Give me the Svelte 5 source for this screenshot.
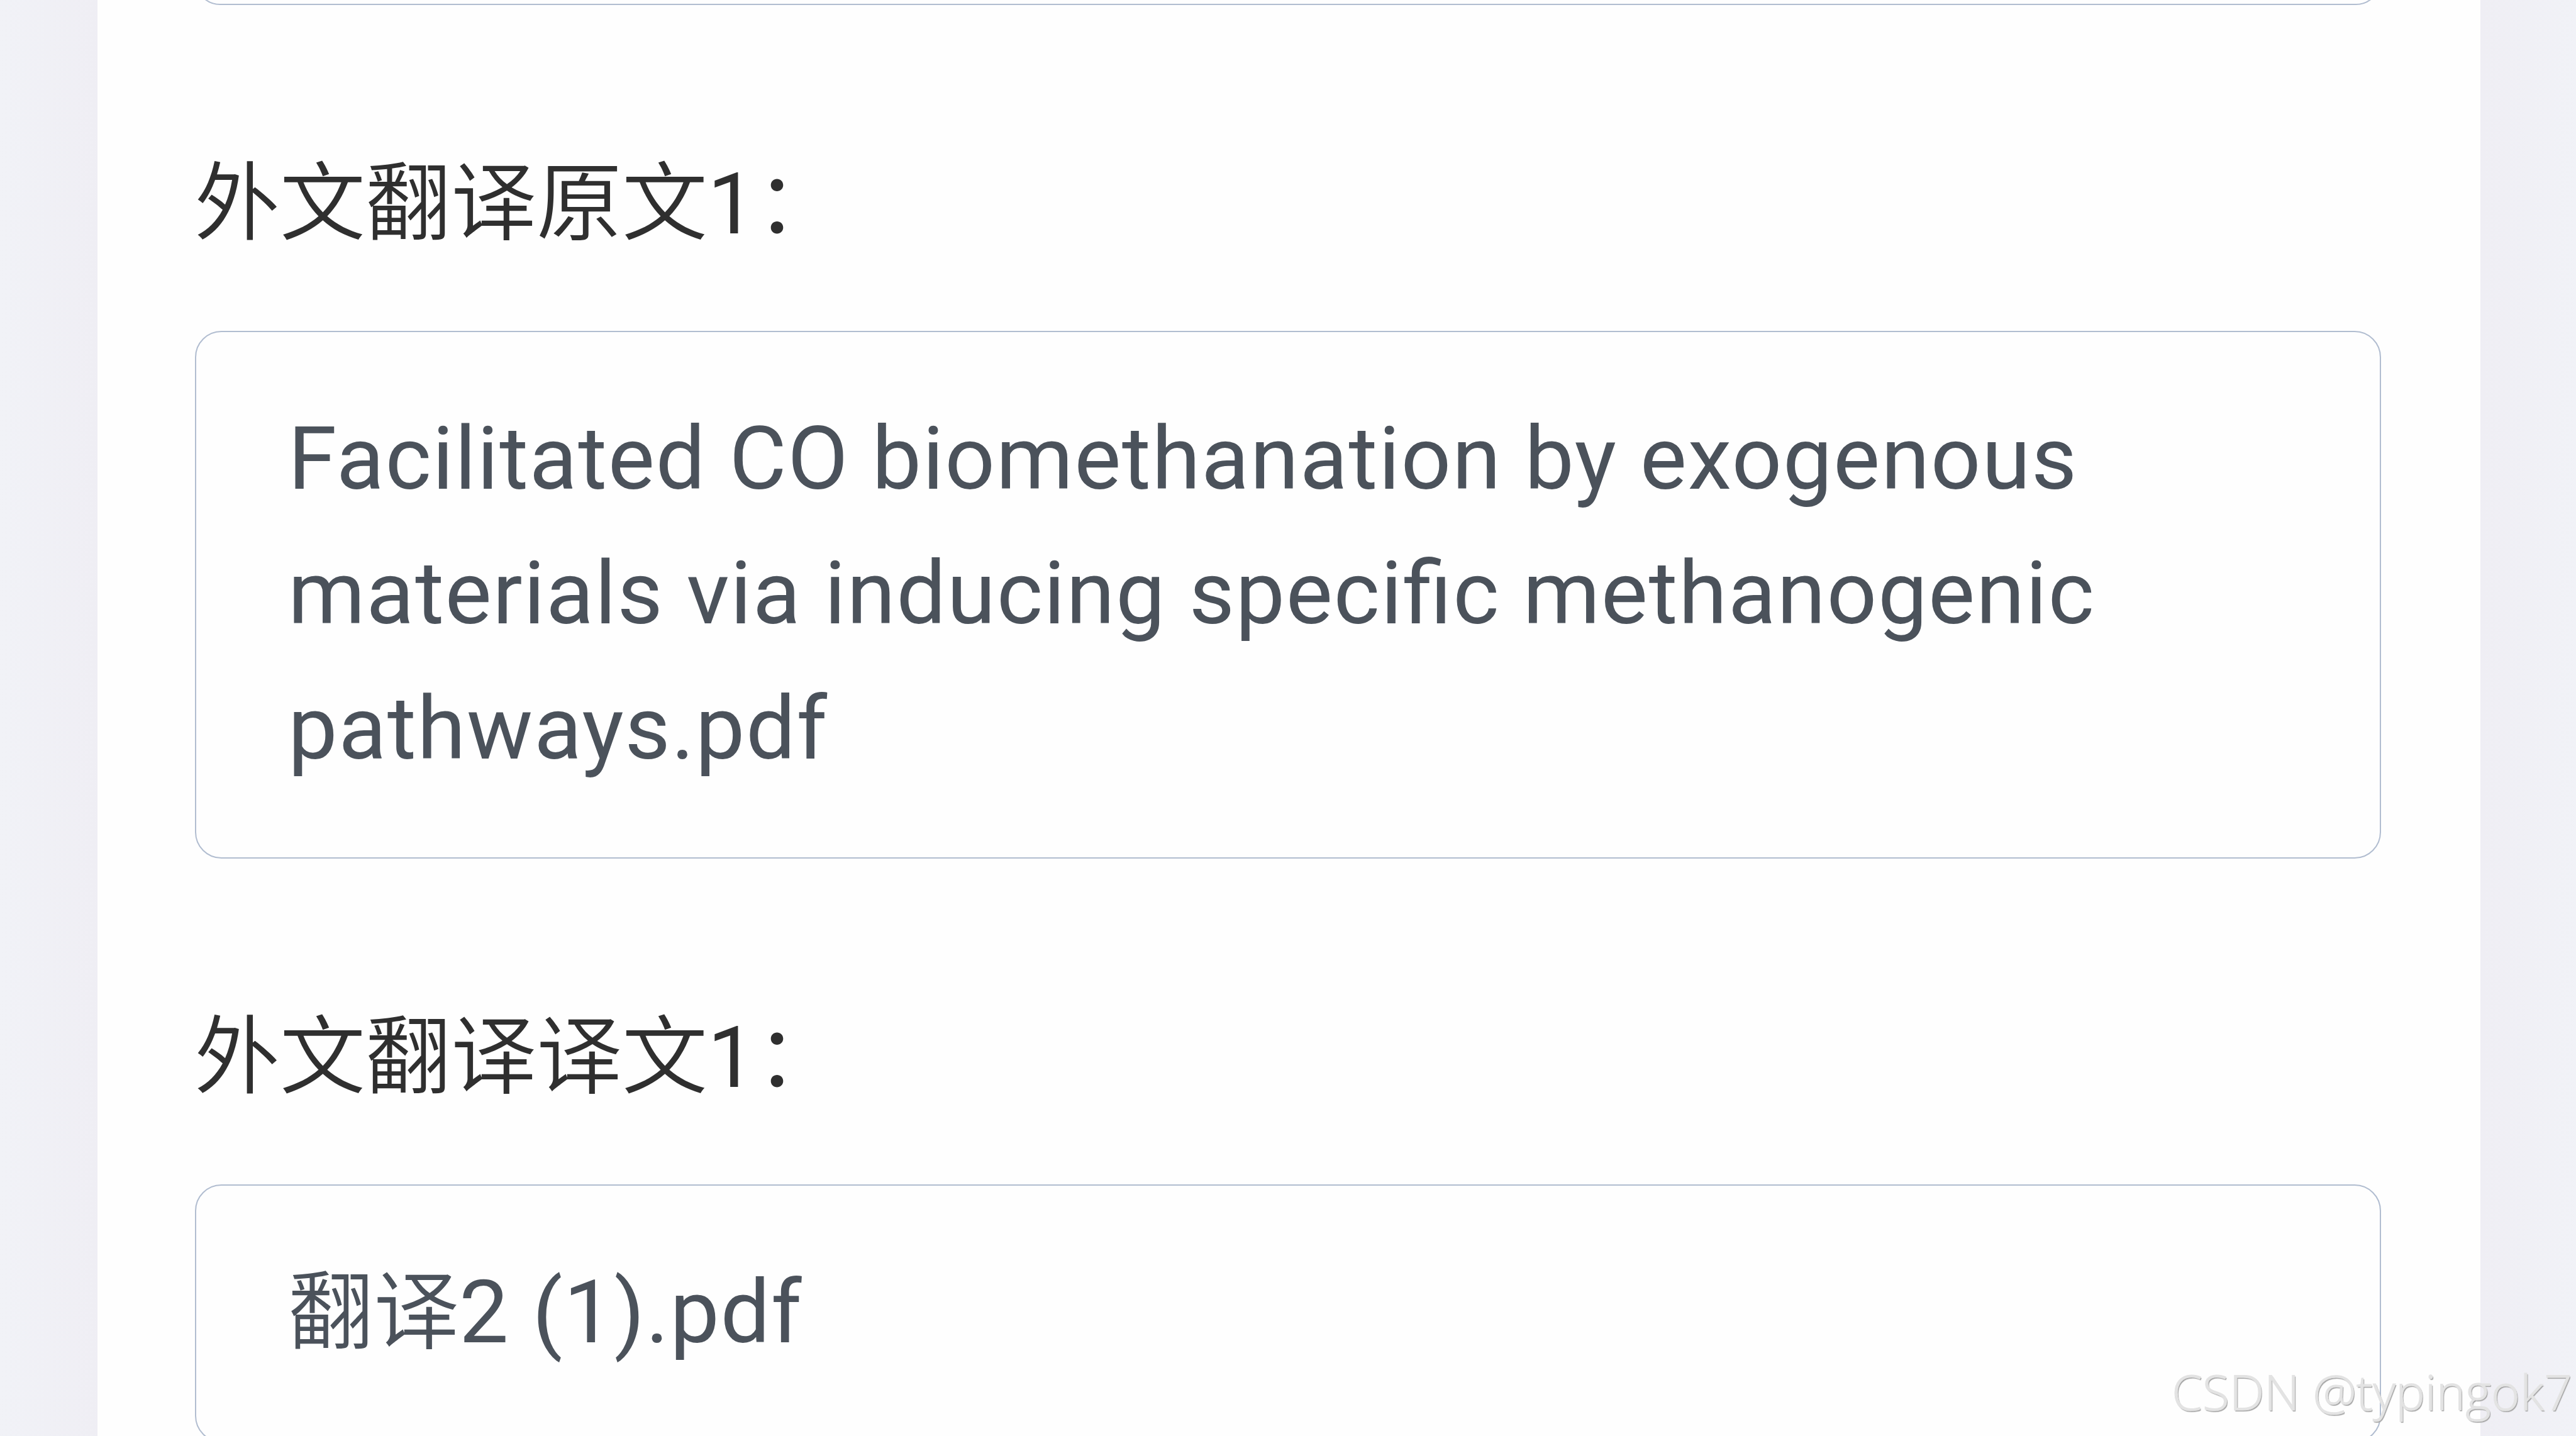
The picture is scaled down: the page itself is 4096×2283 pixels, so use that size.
<script>
  const fields = [
    { label: '外文翻译原文1：', file: 'Facilitated CO biomethanation by exogenous materials via inducing specific methanogenic pathways.pdf' },
    { label: '外文翻译译文1：', file: '翻译2 (1).pdf' }
  ];

  // split into Han and Latin runs, they use different fonts and weights
  function runs(text) {
    return text.match(/[^\x00-\x7f]+|[\x00-\x7f]+/g).map((t) => ({ text: t, han: t.charCodeAt(0) > 127 }));
  }
</script>

<div class="page">
  <main class="card">
    <div class="file-box previous"></div>
    {#each fields as field}
      <section class="field">
        <h2 class="label">{#each runs(field.label) as run}<span class:han={run.han}>{run.text}</span>{/each}</h2>
        <div class="file-box">{#each runs(field.file) as run}<span class:han={run.han}>{run.text}</span>{/each}</div>
      </section>
    {/each}
  </main>
  <div class="watermark">CSDN @typingok7</div>
</div>

<style>
  .page {
    display: flow-root;
    position: relative;
    box-sizing: border-box;
    width: 4096px;
    height: 2283px;
    padding: 0 152px 0 155px;
    overflow: hidden;
    background: linear-gradient(90deg, #f1f2f7 0, #efeef4 155px, #efeef4 3944px, #f1f2f7 4096px);
    font-family: Roboto, "Noto Sans CJK SC", sans-serif;
  }

  .card {
    display: flow-root;
    box-sizing: border-box;
    height: 100%;
    padding: 0 158px 0 155px;
    background: #fefefe;
  }

  .file-box {
    box-sizing: border-box;
    padding: 94px 140px 98px 146px;
    border: 2px solid #b1bdd0;
    border-radius: 42px;
    color: #4b525b;
    font-size: 140px;
    line-height: 214.5px;
    letter-spacing: 1.6px;
    font-feature-settings: "liga" 1;
  }

  .previous {
    height: 80px;
    margin-top: -72px;
    padding: 0;
  }

  .label {
    margin: 0 0 0 -1px;
    height: 517.5px;
    color: #2f2f2f;
    font-size: 136px;
    font-weight: 400;
    line-height: 634px;
  }

  .han {
    font-family: "Noto Sans CJK SC", sans-serif;
    font-size: 136px;
    font-weight: 350;
    line-height: 1;
    letter-spacing: 0;
  }

  .watermark {
    position: absolute;
    right: 6px;
    bottom: 21px;
    color: #e3e3e3;
    font-family: "Open Sans", sans-serif;
    font-size: 78px;
    font-weight: 300;
    line-height: 100px;
    letter-spacing: 0.3px;
    -webkit-text-stroke: 1px #e3e3e3;
    text-shadow: 1.5px 1.5px 1px #a4a4a4;
  }
</style>
